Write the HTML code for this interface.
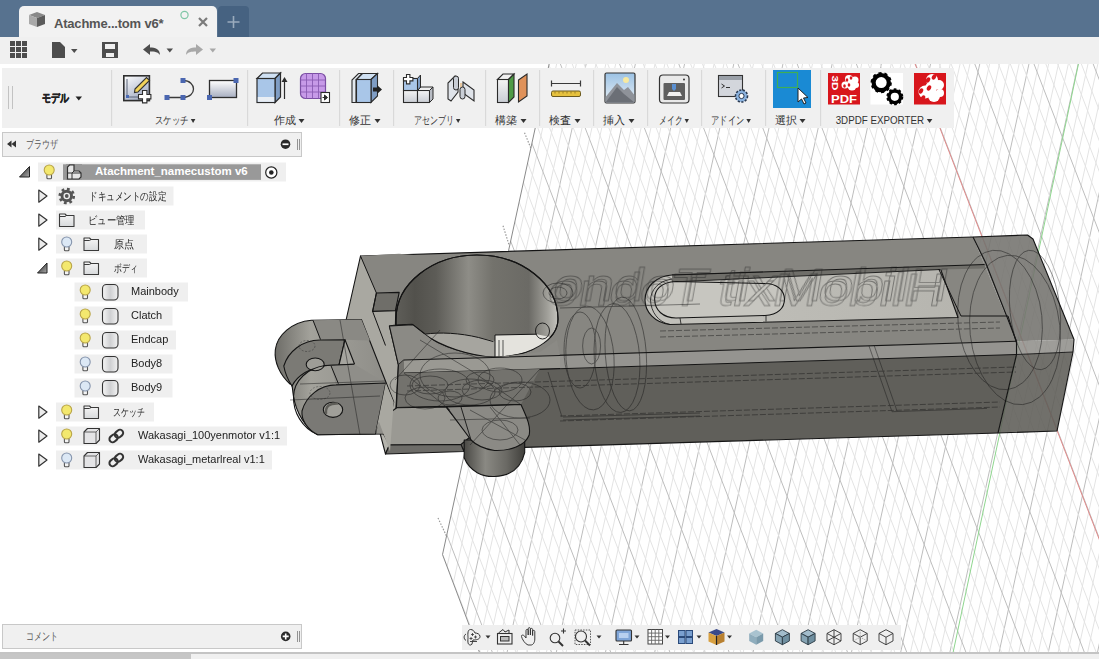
<!DOCTYPE html>
<html><head><meta charset="utf-8">
<style>
*{box-sizing:border-box}
html,body{margin:0;padding:0}
body{width:1099px;height:659px;overflow:hidden;position:relative;background:#fff;font-family:"Liberation Sans",sans-serif;color:#333}
.abs{position:absolute}
#titlebar{left:0;top:0;width:1099px;height:37px;background:#57728f}
#tab{left:19px;top:6px;width:198px;height:31px;background:#f2f2f2;border-radius:5px 5px 0 0}
#plus{left:218px;top:6px;width:31px;height:31px;background:#466281;border-radius:4px 4px 0 0}
#qtb{left:0;top:37px;width:1099px;height:27px;background:#f0f0f0}
#ribbon{left:2px;top:68px;width:952px;height:60px;background:#f0f0f0}
.sep{position:absolute;top:2px;width:1px;height:56px;background:#dcdcdc}
.lbl{position:absolute;top:46px;font-size:10.5px;color:#333;white-space:nowrap;transform:translateX(-50%)}
.tri{display:inline-block;width:0;height:0;border-left:3.5px solid transparent;border-right:3.5px solid transparent;border-top:4px solid #333;vertical-align:1px;margin-left:3px}
#browserhdr{left:2px;top:132px;width:300px;height:25px;background:#f0f0f0;border:1px solid #c8c8c8}
#comment{left:2px;top:624px;width:300px;height:25px;background:#f0f0f0;border:1px solid #c8c8c8}
.row{position:absolute;height:19px;background:#eeeeee}
.rt{position:absolute;font-size:11px;color:#222;white-space:nowrap}
#navbar{left:462px;top:625px;width:439px;height:25px;background:#efefef}
#bottom{left:0;top:652px;width:1099px;height:7px;background:#f0f0f0;border-top:2px solid #c4c4c4}
</style></head><body>

<!-- viewport grid -->
<svg class="abs" style="left:0;top:0" width="1099" height="659" viewBox="0 0 1099 659">
<defs>
<pattern id="pa" patternUnits="userSpaceOnUse" width="49.2" height="100" x="9.2" y="0" patternTransform="skewX(-12.3)"><line x1="0.5" y1="0" x2="0.5" y2="100" stroke="#bdbdbd" stroke-width="1"/><line x1="10.34" y1="0" x2="10.34" y2="100" stroke="#e3e3e3" stroke-width="1"/><line x1="20.18" y1="0" x2="20.18" y2="100" stroke="#e3e3e3" stroke-width="1"/><line x1="30.02" y1="0" x2="30.02" y2="100" stroke="#e3e3e3" stroke-width="1"/><line x1="39.86" y1="0" x2="39.86" y2="100" stroke="#e3e3e3" stroke-width="1"/></pattern>
<pattern id="pb" patternUnits="userSpaceOnUse" width="59.2" height="100" x="2.3" y="0" patternTransform="skewX(21.18)"><line x1="0.5" y1="0" x2="0.5" y2="100" stroke="#bdbdbd" stroke-width="1"/><line x1="12.34" y1="0" x2="12.34" y2="100" stroke="#e3e3e3" stroke-width="1"/><line x1="24.18" y1="0" x2="24.18" y2="100" stroke="#e3e3e3" stroke-width="1"/><line x1="36.02" y1="0" x2="36.02" y2="100" stroke="#e3e3e3" stroke-width="1"/><line x1="47.86" y1="0" x2="47.86" y2="100" stroke="#e3e3e3" stroke-width="1"/></pattern>
<clipPath id="gclip"><polygon points="550,60 442.5,554.6 482,659 1099,659 1099,60"/></clipPath>
</defs>
<g clip-path="url(#gclip)">
<rect x="0" y="60" width="1099" height="600" fill="url(#pa)"/>
<rect x="0" y="60" width="1099" height="600" fill="url(#pb)"/>
<line x1="1092.1" y1="0" x2="951.7" y2="659" stroke="#8fd68f" stroke-width="1"/>
<line x1="890.3" y1="0" x2="1145.6" y2="659" stroke="#e08a8a" stroke-width="1"/>
</g>
<polyline points="550,60 442.5,554.6 482,659" fill="none" stroke="#8a8a8a" stroke-width="1"/>
<g stroke="#999" stroke-width="1.2" stroke-dasharray="1.5 1.5"><path d="M524.5,132.7 L530.8,148 M503,225.7 L509,244.8 M438,518 L446.5,536"/></g>
</svg>

<!-- MODEL -->
<!--MODEL--><svg class="abs" style="left:0;top:0" width="1099" height="659" viewBox="0 0 1099 659">
<defs>
<linearGradient id="ghole" x1="0" y1="0" x2="1" y2="0">
<stop offset="0" stop-color="#5f5e59"/><stop offset="0.12" stop-color="#52514c"/><stop offset="0.25" stop-color="#5d5c57"/><stop offset="0.45" stop-color="#8e8d87"/><stop offset="0.6" stop-color="#73726c"/><stop offset="0.82" stop-color="#6b6a65"/><stop offset="0.93" stop-color="#9e9d97"/><stop offset="1" stop-color="#c4c3bd"/>
</linearGradient>
<linearGradient id="gcyl" x1="0" y1="0" x2="1" y2="0">
<stop offset="0" stop-color="#4a4945"/><stop offset="0.35" stop-color="#8a8983"/><stop offset="0.7" stop-color="#6a6964"/><stop offset="1" stop-color="#403f3b"/>
</linearGradient>
<linearGradient id="glug" x1="0" y1="0" x2="1" y2="0">
<stop offset="0" stop-color="#6e6d68"/><stop offset="0.3" stop-color="#a3a29b"/><stop offset="1" stop-color="#8c8b86"/>
</linearGradient>
<linearGradient id="gfloor" x1="0" y1="0" x2="1" y2="0">
<stop offset="0" stop-color="#c2c1bb"/><stop offset="1" stop-color="#b6b5af"/>
</linearGradient>
<linearGradient id="ghfloor" x1="0" y1="0" x2="1" y2="0">
<stop offset="0" stop-color="#8f8e88"/><stop offset="0.6" stop-color="#a4a39d"/><stop offset="1" stop-color="#b9b8b2"/>
</linearGradient>
</defs>
<g stroke="#141414" stroke-width="1.1" stroke-linejoin="round">
<!-- front face -->
<polygon points="407,360 1016.5,341.3 1016.5,354.5 998,433 390,451.5" fill="#605f5a" stroke="none"/>
<polyline points="998,433 390,451.5" fill="none"/>
<polygon points="407,360 1016.5,341.3 1016.5,354.5 407,374" fill="#959490" stroke="none"/>
<line x1="407" y1="373.5" x2="1016.5" y2="354.5" stroke-width="1"/>
<!-- top face -->
<polygon points="360.5,256 973,237 1016.5,341.3 407,360" fill="#878681" stroke="none"/><polyline points="407,360 360.5,256 973,237" fill="none"/><line x1="407" y1="360" x2="1016.5" y2="341.3"/>
<!-- channel -->
<path d="M672,275 L940,267.5 L958,317.5 L670,324.5 C655,323 645,312 645,300 C645,287 656,276 672,275 Z" fill="url(#gfloor)"/>
<polygon points="672,275 985,264.5 985,268.5 940,269.5 672,282" fill="#6f6e69" stroke="none"/>
<line x1="672" y1="275" x2="985" y2="264.5"/>
<line x1="672" y1="282" x2="940" y2="269.5" stroke-width="0.9"/>
<path d="M676,281.5 C661,282 654,290 654.7,300 C655,310 663,318 676,318 L765,315.5 C778,315 784.5,308 784.5,299 C784,290 777,283.5 765,283.5 Z" fill="#c7c6c0"/>
<path d="M670,324.5 C658,322 651,312 650.5,300 C651,290 658,281 672,279" fill="none" stroke-width="0.8"/>
<line x1="766" y1="315.5" x2="766" y2="321.5" stroke-width="0.8"/>
<line x1="680" y1="318" x2="681" y2="324" stroke-width="0.8"/>
<!-- hole -->
<path d="M396,326 L396,319 C396,283.7 432.3,255 477,255 C521.7,255 558,283.7 558,319 C558,340 530,357 495,357.1 C470,356 440,346 424.6,334.2 L412.3,324.4 L395.4,325 Z" fill="url(#ghole)"/>
<path d="M424.6,334.2 C440,332 460,333 478.6,337.5 L495,341 L495,357.1 C470,356 440,346 424.6,334.2 Z" fill="#a6a59f" stroke="none"/>
<path d="M495,335 L536.8,334.2 L550,337 C545,346 530,354 495,357.1 Z" fill="#e4e3dd" stroke="none"/>
<path d="M396,326 L396,319 C396,283.7 432.3,255 477,255 C521.7,255 558,283.7 558,319 C558,340 530,357 495,357.1 C470,356 440,346 424.6,334.2" fill="none"/>
<path d="M424.6,334.2 C440,332 460,333 478.6,337.5 L493.4,341.6" fill="none" stroke-width="1"/>
<path d="M495,357.1 V335 L536.8,334.2" fill="none" stroke-width="1"/>
<path d="M499,357 V340 M503,357 V340" fill="none" stroke-width="0.7"/>
<ellipse cx="542.5" cy="331" rx="7" ry="8" fill="none" stroke-width="0.9"/>
<!-- left end face -->
<polygon points="360.5,256 396,300 395.4,325 389.4,326 398.4,365 396,407.5 389.4,445 390,451.5 379,421.7 340,347" fill="#a9a8a1"/>
<polygon points="360.5,256 399,253.8 437,257 404,285 399,292.4 376.4,293" fill="#878681" stroke="none"/>
<polygon points="376.4,293 399.2,292.4 395.4,310.6 372.6,311.4" fill="#6f6e69"/>
<polyline points="360.5,256 376.4,293 372.6,311.4 385.5,345.5" fill="none" stroke-width="1"/>
<!-- latch block -->
<polygon points="389.4,326 412.3,324.4 424.6,334.2 440,346 470,356 495,357.1 540,352 557,340 560,356 407,360 398.4,365" fill="#8b8a85" stroke="none"/>
<polyline points="398.4,365 389.4,326 412.8,324.6 424.7,333.7" fill="none"/>

<polygon points="404,360 560,355.5 560,368.5 404,373" fill="#9a9993" stroke="none"/>
<polyline points="398.4,365 404,360 560,355.5" fill="none"/>
<polyline points="404,373 560,368.5" fill="none" stroke-width="1"/>
<polygon points="398.4,365 404,360 404,373 540,368.9 521,404.5 396.4,407.5" fill="#73726d" stroke="none"/><polyline points="398.4,365 396.4,407.5 521,404.5" fill="none"/>
<!-- base plate -->
<polygon points="377,421.7 396.8,407.7 446,407 470,437 461,444.5 389.4,445" fill="#9a9993"/>
<polygon points="377,421.7 389.4,445 385.5,454" fill="#b5b4ad"/>
<polygon points="389.4,445 461,444.5 464,451.5 385.5,454" fill="#6d6c68"/>
<!-- cylinder -->
<path d="M464.2,440 V457.8 C470,472 483,477 494.5,476.5 C510,476 521,468 524.7,452.6 V440 Z" fill="url(#gcyl)"/>
<path d="M446.4,406.9 L521,404.5 C526,416 531,425 529.2,435 C525,446 510,451 494.5,450.5 C484,449 476,445 471,440 Z" fill="#8b8a85"/><path d="M461,407 L471,440" fill="none" stroke-width="0.9"/>
<!-- lugs -->
<path d="M311.4,320.3 L361.4,319.5 L393.7,402 L385.8,434 L317.8,434.7 C305,428 296,412 293.5,396.4 C292,388 293,384 290,384 C280,375 274,362 275.3,350 C277,335 292,322 311.4,320.3 Z" fill="url(#glug)"/>
<polygon points="313,320.3 361.4,319.5 370,340.5 345,339.7 320.5,339.5" fill="#8a8984" stroke="none"/>
<path d="M313,320.3 L320.5,339.5" fill="none" stroke-width="1"/>
<path d="M283.8,366 C288,352 302,340 320,340 L345,339.7 L339,365 L327.4,365.5 C310,367 297,376 292,386 C288,380 285,373 283.8,366 Z" fill="#7b7a75"/>
<polygon points="345,339.7 354.5,364 339,365" fill="#a6a59f"/>
<ellipse cx="307" cy="346" rx="8" ry="5.5" fill="none" stroke="#333" stroke-width="0.7" stroke-dasharray="2 1.5" opacity="0.7"/>
<ellipse cx="315.2" cy="364.4" rx="9" ry="6.4" fill="#9e9d97"/>
<path d="M325,365.5 L354.2,364.2 L385.8,383 L336,384.9 L331.1,366 Z" fill="#8f8e89" stroke="none"/>
<path d="M325,365.5 C308,368 294,380 293.5,396.4 C293,412 302,428 317.8,434.7" fill="none"/>
<path d="M325,365.5 L354.2,364.2" fill="none"/>
<path d="M331.1,366 L338.4,383.7" fill="none" stroke-width="1"/>
<path d="M302,411 C306,396 320,385 336,384.9 L385.8,383 L375.5,434 L317.8,434.7 C308,430 301,420 302,411 Z" fill="#7a7975"/>
<ellipse cx="333" cy="409.8" rx="9.7" ry="7.6" fill="#a09f99"/>
<path d="M326,414 C325,406 330,403 338,403.5" fill="none" stroke="#5e5d58" stroke-width="2.5"/>
<ellipse cx="320" cy="393" rx="10" ry="6.5" fill="none" stroke="#333" stroke-width="0.7" stroke-dasharray="2 1.5" opacity="0.6"/>
<polygon points="385.8,383 393.7,402 390,451.5 379,421.7 375.5,434" fill="#a9a8a1" stroke="none"/>
<!-- endcap translucent -->
<polygon points="973,237 1027.5,235 1033,239 1074,339.5 1016.5,341.3" fill="#73726d" fill-opacity="0.88" stroke="none"/>
<polygon points="1016.5,341.3 1074,339.5 1073,352 1016.5,354.5" fill="#8e8d88" fill-opacity="0.86" stroke="none"/>
<polygon points="1016.5,354.5 1073,352 1057,431 998,433" fill="#5d5c57" fill-opacity="0.88" stroke="none"/>
<polyline points="973,237 1027.5,235 1033,239 1074,339.5 1073,352 1057,431 998,433" fill="none"/>
<polyline points="973,237 985.8,263 1016.5,341.3 1016.5,354.5 998,433" fill="none"/>
<polyline points="1016.5,354.5 1073,352" fill="none" stroke-width="0.9"/>
<polyline points="938.7,269 961,316 1008,316 1016.5,343" fill="none" stroke-width="1"/>
</g>
<!-- hidden wireframe -->
<g fill="none" stroke="#1a1a1a" stroke-width="0.8" opacity="0.6">
<ellipse cx="625.8" cy="354" rx="20.5" ry="57" transform="rotate(-4 625.8 354)"/>
<ellipse cx="617" cy="358" rx="22.7" ry="54.6" transform="rotate(-4 617 358)"/>
<ellipse cx="590" cy="358" rx="24" ry="52" transform="rotate(-4 590 358)"/>
<ellipse cx="591.6" cy="346" rx="9" ry="18"/>
<ellipse cx="580" cy="350" rx="16" ry="38"/>
<path d="M563,417 L700,413 M563,420 L700,416 M560,308 L700,304 M562,417 L548,372"/>
<ellipse cx="558" cy="293" rx="15" ry="10"/>
<ellipse cx="558" cy="293" rx="9" ry="6"/>
<ellipse cx="1015" cy="330" rx="45" ry="75" transform="rotate(-6 1015 330)"/>
<ellipse cx="1000" cy="320" rx="42" ry="70" transform="rotate(-6 1000 320)"/>
<ellipse cx="1035" cy="310" rx="25" ry="60" transform="rotate(-6 1035 310)"/>
<ellipse cx="440" cy="385" rx="30" ry="16"/>
<ellipse cx="470" cy="392" rx="25" ry="13"/>
<ellipse cx="500" cy="380" rx="22" ry="12"/>
<ellipse cx="425" cy="398" rx="20" ry="11"/>
<ellipse cx="455" cy="375" rx="35" ry="22"/>
<ellipse cx="520" cy="400" rx="30" ry="18"/>
<ellipse cx="430" cy="385" rx="18" ry="9"/><ellipse cx="480" cy="380" rx="14" ry="8"/><ellipse cx="482" cy="390" rx="20" ry="10"/><ellipse cx="515" cy="392" rx="16" ry="9"/><ellipse cx="450" cy="398" rx="12" ry="7"/><ellipse cx="405" cy="385" rx="15" ry="10"/><ellipse cx="500" cy="430" rx="18" ry="10"/>
<path d="M404,373 L450,410 M470,370 L520,404 M540,369 L470,445 M420,340 L470,370 M440,330 L395,380"/>
<path d="M407,386 L1016,367 M407,391 L1016,372 M560,416 L1000,402 M560,421 L1000,407" stroke-dasharray="6 2"/>
<path d="M660,331 L1000,322 M660,337 L1000,328" stroke-dasharray="6 2"/>
<path d="M869,346 L892,411.7 L987,408.4 M874,345 L897,411"/>
<path d="M300,384 L385,381 M290,400 L380,396 M340,320 L360,435"/>
<path d="M470,410 L525,440 M490,407 L520,445 M450,420 L530,418"/>
</g>
<!-- text wireframe -->
<g transform="translate(546,306) skewX(-10) scale(1,1.15)" fill="none" stroke="#222" stroke-width="0.7" opacity="0.45" font-family="Liberation Sans" font-size="40">
<text x="0" y="0" textLength="395" lengthAdjust="spacingAndGlyphs">ondoT tixMobilH</text>
<text x="4" y="-5" textLength="395" lengthAdjust="spacingAndGlyphs">ondoT tixMobilH</text>
</g>
</svg>
<!--/MODEL-->

<!-- title bar -->
<div id="titlebar" class="abs"></div>
<div id="tab" class="abs"></div>
<div id="plus" class="abs"></div>
<svg class="abs" style="left:0;top:0" width="260" height="37">
<polygon points="29,15 37,12 45,15 37,18" fill="#888"/>
<polygon points="29,15 37,18 37,27 29,24" fill="#a9a9a9"/>
<polygon points="37,18 45,15 45,24 37,27" fill="#5c5c5c"/>
<circle cx="184.5" cy="15" r="3.6" fill="none" stroke="#7fc6a6" stroke-width="1.2"/>
<path d="M199,18 L207,26 M207,18 L199,26" stroke="#7b7b7b" stroke-width="2.2"/>
<path d="M233.5,16 V28 M227.5,22 H239.5" stroke="#9aabbd" stroke-width="1.6"/>
</svg>
<div class="abs" style="left:54px;top:15.5px;font-size:13px;font-weight:bold;color:#555;letter-spacing:-0.2px">Atachme...tom v6*</div>

<div id="qtb" class="abs"></div>
<svg class="abs" style="left:0;top:37px" width="230" height="27">
<g fill="#4d4d4d">
<rect x="10" y="4" width="5" height="5"/><rect x="16" y="4" width="5" height="5"/><rect x="22" y="4" width="5" height="5"/>
<rect x="10" y="10" width="5" height="5"/><rect x="16" y="10" width="5" height="5"/><rect x="22" y="10" width="5" height="5"/>
<rect x="10" y="16" width="5" height="5"/><rect x="16" y="16" width="5" height="5"/><rect x="22" y="16" width="5" height="5"/>
<path d="M52,5 H60 L65,10 V21 H52 Z"/>
<path d="M71,12 H77.5 L74.25,16 Z"/>
<path d="M102,5 H118 V21 H102 Z M105,7 V12 H115 V7 Z M106,16 V20 H114 V16 Z" fill-rule="evenodd"/>
<path d="M166.5,11.5 H173 L169.75,15.5 Z"/>
<path d="M143,12.5 L150,7 V10.5 C155,10.5 160,12 160,18 C158,15 155,14.5 150,14.5 V18 Z"/>
</g>
<g fill="#a8a8a8">
<path d="M203,12.5 L196,7 V10.5 C191,10.5 186,12 186,18 C188,15 191,14.5 196,14.5 V18 Z"/>
<path d="M209.5,11.5 H216 L212.75,15.5 Z"/>
</g>
</svg>

<div id="ribbon" class="abs"></div>
<svg class="abs" style="left:0;top:0" width="960" height="132" viewBox="0 0 960 132">
<defs>
<linearGradient id="gsk" x1="0" y1="0" x2="0.6" y2="1"><stop offset="0" stop-color="#ffffff"/><stop offset="1" stop-color="#a3adc4"/></linearGradient>
<linearGradient id="grc" x1="0" y1="0" x2="0" y2="1"><stop offset="0" stop-color="#ffffff"/><stop offset="1" stop-color="#a7aec0"/></linearGradient>
<linearGradient id="gsky" x1="0" y1="0" x2="0" y2="1"><stop offset="0" stop-color="#9cc2e4"/><stop offset="1" stop-color="#e8f0f6"/></linearGradient>
<linearGradient id="gbox" x1="0" y1="0" x2="0" y2="1"><stop offset="0" stop-color="#f4f4f4"/><stop offset="1" stop-color="#c9cdd4"/></linearGradient>
</defs>
<g stroke="#c2c2c2" stroke-width="1"><line x1="8.5" y1="86" x2="8.5" y2="109"/><line x1="12.5" y1="86" x2="12.5" y2="109"/></g>
<g fill="#d9d9d9">
<rect x="111" y="70" width="1.2" height="56"/><rect x="247" y="70" width="1.2" height="56"/><rect x="339" y="70" width="1.2" height="56"/>
<rect x="393" y="70" width="1.2" height="56"/><rect x="485" y="70" width="1.2" height="56"/><rect x="539" y="70" width="1.2" height="56"/>
<rect x="593" y="70" width="1.2" height="56"/><rect x="647" y="70" width="1.2" height="56"/><rect x="701" y="70" width="1.2" height="56"/>
<rect x="765" y="70" width="1.2" height="56"/><rect x="820" y="70" width="1.2" height="56"/>
</g>
<!-- sketch -->
<rect x="123.8" y="75.8" width="25.6" height="24.8" fill="url(#gsk)" stroke="#2e2e2e" stroke-width="1.6"/>
<path d="M127,79 V97 H145" fill="none" stroke="#5a6478" stroke-width="1"/>
<rect x="126" y="95" width="3" height="3" fill="#4a6ab5"/>
<path d="M135,89 L146.5,77.5 L149.5,80.5 L138,92 L134.5,92.5 Z" fill="#f2d35a" stroke="#333" stroke-width="1.1"/>
<path d="M142.5,90.5 h4.4 v4 h4 v4.4 h-4 v4 h-4.4 v-4 h-4 v-4.4 h4 Z" fill="#fff" stroke="#2e2e2e" stroke-width="1.1"/>
<!-- line -->
<path d="M167,97.5 H183 M183,80.5 C197,80.5 197,97.5 183,97.5" fill="none" stroke="#3a3a3a" stroke-width="1.3"/>
<g fill="#4a66b0"><rect x="164.5" y="95" width="5" height="5"/><rect x="180.5" y="95" width="5" height="5"/><rect x="180.5" y="78" width="5" height="5"/></g>
<!-- rect -->
<rect x="209.5" y="80.5" width="27" height="17" fill="url(#grc)" stroke="#2e2e2e" stroke-width="1.3"/>
<g fill="#4a66b0"><rect x="233.5" y="78" width="5" height="5"/><rect x="207" y="95" width="5" height="5"/></g>
<!-- extrude -->
<path d="M257,78.5 L262.5,73 H280.5 L275,78.5 Z" fill="#cfe0f2" stroke="#2b2b2b" stroke-width="1.2"/>
<path d="M275,78.5 L280.5,73 V97 L275,102.5 Z" fill="#7f9dc4" stroke="#2b2b2b" stroke-width="1.2"/>
<rect x="257" y="78.5" width="18" height="24" fill="#a9c6e8" stroke="#2b2b2b" stroke-width="1.2"/>
<rect x="257.8" y="97" width="16.4" height="4.8" fill="#e9eef4"/>
<path d="M284.5,99 V79" stroke="#2b2b2b" stroke-width="1.2"/><path d="M281.5,82 L284.5,77 L287.5,82 Z" fill="#2b2b2b"/>
<!-- purple mesh -->
<rect x="300.5" y="73.5" width="25" height="25" rx="5" fill="#c79ae8" stroke="#7b4fa3" stroke-width="1.2"/>
<g stroke="#8a5bb3" stroke-width="0.9" fill="none"><path d="M300.5,80 H325 M300.5,86 H325 M300.5,92 H325 M306.5,73.5 V98.5 M312.5,73.5 V98.5 M318.5,73.5 V98.5"/></g>
<rect x="321" y="92.5" width="8.5" height="10" fill="#fff" stroke="#2b2b2b" stroke-width="1.1"/>
<path d="M322.5,97.5 H326 M324.5,95 L327.5,97.5 L324.5,100 Z" fill="#2b2b2b" stroke="#2b2b2b" stroke-width="1"/>
<!-- modify -->
<path d="M352,102.5 V80 L358.5,73.5 H362 L356,80 V102.5 Z" fill="#e3e8ee" stroke="#2b2b2b" stroke-width="1.1"/>
<path d="M356.5,79.5 L362.5,73.5 H377.5 L371,79.5 Z" fill="#cfe0f2" stroke="#2b2b2b" stroke-width="1.1"/>
<path d="M371,79.5 L377.5,73.5 V96 L371,102.5 Z" fill="#7f9dc4" stroke="#2b2b2b" stroke-width="1.1"/>
<rect x="356.5" y="79.5" width="14.5" height="23" fill="#a9c6e8" stroke="#2b2b2b" stroke-width="1.1"/>
<path d="M373,87.5 H377 V85 L382,89.5 L377,94 V91.5 H373 Z" fill="#222"/>
<!-- assembly 1 -->
<rect x="403.5" y="90.5" width="14" height="12" fill="url(#gbox)" stroke="#2b2b2b" stroke-width="1.1"/>
<rect x="417.5" y="90.5" width="12" height="12" fill="url(#gbox)" stroke="#2b2b2b" stroke-width="1.1"/>
<path d="M417.5,90.5 L421,87 H433 L429.5,90.5 Z" fill="#eee" stroke="#2b2b2b" stroke-width="1"/>
<path d="M429.5,90.5 L433,87 V99 L429.5,102.5 Z" fill="#b8bcc4" stroke="#2b2b2b" stroke-width="1"/>
<rect x="403.5" y="78.5" width="14" height="12" fill="#a9c6e8" stroke="#2b2b2b" stroke-width="1.1"/>
<path d="M417.5,78.5 L420.5,75 V87 L417.5,90.5 Z" fill="#7f9dc4" stroke="#2b2b2b" stroke-width="1"/>
<path d="M406.5,74.5 h3.4 v3 h3 v3.4 h-3 v3 h-3.4 v-3 h-3 v-3.4 h3 Z" fill="#fff" stroke="#2b2b2b" stroke-width="1.1"/>
<!-- assembly 2 -->
<path d="M448,99 L448,83 L455,76 L458,78 L458,92 L451,101 Z" fill="#dfe3e9" stroke="#2b2b2b" stroke-width="1.1"/>
<path d="M463,82 L474,90 V101 L463,93 Z" fill="#dfe3e9" stroke="#2b2b2b" stroke-width="1.1"/>
<rect x="453.5" y="76" width="5" height="14" rx="2.5" fill="#c9ced6" stroke="#2b2b2b" stroke-width="1"/>
<rect x="460" y="87" width="5" height="12" rx="2.5" fill="#c9ced6" stroke="#2b2b2b" stroke-width="1"/>
<path d="M461,83 V87" stroke="#e0a050" stroke-width="1"/>
<!-- construct -->
<path d="M497.5,79.5 L503,74 H514 L508.5,79.5 Z" fill="#f0f0f0" stroke="#2b2b2b" stroke-width="1.1"/>
<rect x="497.5" y="79.5" width="11" height="23" fill="url(#gbox)" stroke="#2b2b2b" stroke-width="1.1"/>
<path d="M508.5,79.5 L514,74 V97 L508.5,102.5 Z" fill="#4e9a45" stroke="#2b2b2b" stroke-width="1.1"/>
<path d="M518.5,80 L527,74 V96 L518.5,102 Z" fill="#e0925a" stroke="#2b2b2b" stroke-width="1.1"/>
<!-- inspect -->
<path d="M551.5,83.5 H580.5 M551.5,80.5 V86.5 M580.5,80.5 V86.5" stroke="#3a3a3a" stroke-width="1.2"/>
<rect x="551.5" y="91" width="29" height="5.5" rx="1.5" fill="#e6c13e" stroke="#6b5a20" stroke-width="1"/>
<path d="M555,91.5 v2 M559,91.5 v2 M563,91.5 v2 M567,91.5 v2 M571,91.5 v2 M575,91.5 v2" stroke="#8a7020" stroke-width="0.8"/>
<!-- insert -->
<rect x="605" y="73" width="30" height="30" rx="1.5" fill="url(#gsky)" stroke="#333" stroke-width="1.2"/>
<circle cx="626" cy="80" r="3" fill="#f7e9a0"/>
<path d="M605.6,97 L617,83 L624,90 L628,87 L634.4,95 V102.4 H605.6 Z" fill="#8e9299"/>
<path d="M605.6,102.4 L617,87 L624,94 L634.4,102.4 Z" fill="#6b6f76"/>
<!-- make -->
<rect x="659.5" y="75" width="29.5" height="28" rx="3.5" fill="#e9e9e9" stroke="#333" stroke-width="1.2"/>
<rect x="663.5" y="83" width="21.5" height="17" rx="1" fill="#5e5e5e"/>
<path d="M667,96 H682 L680,92 H669 Z" fill="#f0f0f0"/>
<path d="M672,84 h4 v5 l-2,2 l-2,-2 Z" fill="#5a8fd0"/>
<circle cx="684" cy="79.5" r="1" fill="#333"/>
<!-- addin -->
<rect x="718.5" y="75.5" width="24" height="21" fill="#d3d6dc" stroke="#333" stroke-width="1.1"/>
<rect x="719" y="76" width="23" height="4" fill="#9aa0a8"/>
<path d="M721.5,84 L724.5,86 L721.5,88 M726,87.5 H730" fill="none" stroke="#333" stroke-width="1"/>
<circle cx="741.5" cy="96" r="6" fill="#8bb3e0" stroke="#2b3a50" stroke-width="1.6" stroke-dasharray="2.2 1.4"/>
<circle cx="741.5" cy="96" r="2.6" fill="#fff" stroke="#2b3a50" stroke-width="1"/>
<!-- select -->
<rect x="773" y="70" width="38" height="38" fill="#1a8ad4"/>
<rect x="777.5" y="72.5" width="20" height="15" fill="none" stroke="#3fae55" stroke-width="1.2"/>
<path d="M798,88 V102 L801.5,99 L804,104 L806,103 L803.5,98 L808,97.5 Z" fill="#fff" stroke="#222" stroke-width="1"/>
<!-- 3dpdf -->
<rect x="828" y="73" width="32" height="31.5" fill="#d8161c"/>
<text x="844" y="102.5" font-family="Liberation Sans" font-weight="bold" font-size="11" fill="#fff" text-anchor="middle" textLength="26" lengthAdjust="spacingAndGlyphs">PDF</text>
<text transform="translate(831.5,75.5) rotate(90)" font-family="Liberation Sans" font-weight="bold" font-size="9.5" fill="#fff" textLength="15" lengthAdjust="spacingAndGlyphs">3D</text>
<g fill="#fff"><circle cx="849" cy="79" r="4"/><circle cx="855" cy="80" r="3.5"/><circle cx="845" cy="85" r="3.5"/><circle cx="852" cy="86" r="4.5"/><circle cx="856" cy="85" r="3"/></g>
<g fill="#d8161c"><ellipse cx="847" cy="80" rx="1.3" ry="1.8"/><ellipse cx="851" cy="78" rx="1.3" ry="1.8"/><ellipse cx="844.5" cy="86" rx="1.3" ry="1.8"/><ellipse cx="849" cy="85" rx="1.3" ry="1.8"/></g>
<!-- gears -->
<rect x="870.5" y="73" width="32.5" height="31.5" fill="#fff"/>
<circle cx="881.2" cy="82.6" r="7.6" fill="none" stroke="#000" stroke-width="4.2"/>
<circle cx="881.2" cy="82.6" r="9.4" fill="none" stroke="#000" stroke-width="2.5" stroke-dasharray="3 2.9"/>
<circle cx="894.8" cy="96.8" r="5.8" fill="none" stroke="#000" stroke-width="3.4"/>
<circle cx="894.8" cy="96.8" r="7.4" fill="none" stroke="#000" stroke-width="2.2" stroke-dasharray="2.6 2.2"/>
<!-- red flower -->
<rect x="914" y="73" width="32" height="31.5" fill="#d8161c"/>
<g fill="#fff"><circle cx="932" cy="80" r="6"/><circle cx="939" cy="85" r="5"/><circle cx="925" cy="92" r="6.5"/><circle cx="934" cy="96" r="6"/><circle cx="931" cy="88" r="6"/><circle cx="940" cy="93" r="4"/></g>
<g fill="#d8161c"><ellipse cx="928" cy="80" rx="2" ry="2.8" transform="rotate(30 928 80)"/><ellipse cx="934" cy="77" rx="2" ry="2.8" transform="rotate(30 934 77)"/><ellipse cx="921" cy="91" rx="2" ry="2.8" transform="rotate(30 921 91)"/><ellipse cx="929" cy="88" rx="2" ry="2.8" transform="rotate(30 929 88)"/><ellipse cx="923" cy="98" rx="2" ry="2.8" transform="rotate(30 923 98)"/></g>
</svg>
<div class="abs lbl" style="left:175.4px;top:114px;transform:translateX(-50%) scaleX(0.77)">スケッチ<span class="tri"></span></div>
<div class="abs lbl" style="left:289.4px;top:114px;transform:translateX(-50%) scaleX(1)">作成<span class="tri"></span></div>
<div class="abs lbl" style="left:364.5px;top:114px;transform:translateX(-50%) scaleX(1)">修正<span class="tri"></span></div>
<div class="abs lbl" style="left:436.9px;top:114px;transform:translateX(-50%) scaleX(0.73)">アセンブリ<span class="tri"></span></div>
<div class="abs lbl" style="left:510.5px;top:114px;transform:translateX(-50%) scaleX(1)">構築<span class="tri"></span></div>
<div class="abs lbl" style="left:564.7px;top:114px;transform:translateX(-50%) scaleX(1)">検査<span class="tri"></span></div>
<div class="abs lbl" style="left:618.7px;top:114px;transform:translateX(-50%) scaleX(1)">挿入<span class="tri"></span></div>
<div class="abs lbl" style="left:674.2px;top:114px;transform:translateX(-50%) scaleX(0.71)">メイク<span class="tri"></span></div>
<div class="abs lbl" style="left:731.4px;top:114px;transform:translateX(-50%) scaleX(0.75)">アドイン<span class="tri"></span></div>
<div class="abs lbl" style="left:790.4px;top:114px;transform:translateX(-50%) scaleX(1)">選択<span class="tri"></span></div>
<div class="abs lbl" style="left:884.3px;top:114px;transform:translateX(-50%) scaleX(0.93)">3DPDF EXPORTER<span class="tri"></span></div>
<div class="abs" style="left:41.5px;top:91px;font-size:11.5px;font-weight:bold;color:#222;-webkit-text-stroke:0.45px #222;transform:scaleX(0.74);transform-origin:left">モデル</div><svg class="abs" style="left:75px;top:96px" width="8" height="5"><path d="M0.5,0.5 H7 L3.75,4.5 Z" fill="#222"/></svg>

<div id="browserhdr" class="abs"></div>
<svg class="abs" style="left:0;top:130px" width="305" height="30" viewBox="0 130 305 30">
<path d="M7,144 L11.5,140.5 V147.5 Z M11.5,144 L16,140.5 V147.5 Z" fill="#333"/>
<circle cx="285.5" cy="144.2" r="4.8" fill="#2a2a2a"/><rect x="282.5" y="143.4" width="6" height="1.7" fill="#fff"/>
<path d="M297.5,139 V150 M299.5,139 V150" stroke="#888" stroke-width="0.9"/>
</svg>
<div class="abs" style="left:26px;top:137px;font-size:11px;color:#555;transform:scaleX(0.73);transform-origin:left">ブラウザ</div>
<!--TREE--><svg class="abs" style="left:0;top:0" width="300" height="480" viewBox="0 0 300 480"><defs>
<linearGradient id="gtri" x1="0" y1="0" x2="1" y2="1"><stop offset="0" stop-color="#222"/><stop offset="1" stop-color="#aaa"/></linearGradient>
<linearGradient id="gfold" x1="0" y1="0" x2="0" y2="1"><stop offset="0" stop-color="#f6f6f6"/><stop offset="1" stop-color="#d8dadc"/></linearGradient>
<linearGradient id="gbody" x1="0" y1="0" x2="1" y2="0"><stop offset="0" stop-color="#f6f6f6"/><stop offset="0.5" stop-color="#cfd0d2"/><stop offset="1" stop-color="#f2f2f2"/></linearGradient>
</defs><rect x="38" y="162.5" width="248" height="19" fill="#efefef"/><path d="M19.5,177 L29.5,166.5 V177 Z" fill="url(#gtri)" stroke="#222" stroke-width="1"/><rect x="46.9" y="174" width="4.6" height="4.8" rx="1" fill="#f4f4f4" stroke="#555" stroke-width="1.1"/><circle cx="49.2" cy="170" r="5" fill="#f3e86e" stroke="#b9a548" stroke-width="1.1"/><rect x="66" y="164" width="16" height="16" fill="#999"/><path d="M67.5,179 V167 L69.5,165 H74 V171 H79 L81,173 V177 L79,179 Z" fill="#e6e6e6" stroke="#333" stroke-width="1.2"/><path d="M74,171 L72,173 V179 M72,173 H81" fill="none" stroke="#333" stroke-width="1"/><rect x="63" y="164.3" width="198" height="15.6" fill="#999"/><circle cx="271.3" cy="172.5" r="5.6" fill="#fff" stroke="#222" stroke-width="1.2"/><circle cx="271.3" cy="172.5" r="2.3" fill="#222"/><path d="M67.5,179 V167 L69.5,165 H74 V171 H79 L81,173 V177 L79,179 Z" fill="#e6e6e6" stroke="#333" stroke-width="1.2"/><path d="M74,171 L72,173 V179 M72,173 H81 M67.5,173 H72" fill="none" stroke="#333" stroke-width="1"/><rect x="56" y="186.5" width="117.5" height="19" fill="#efefef"/><path d="M38.8,190 L47,196 L38.8,202.2 Z" fill="#ececec" stroke="#333" stroke-width="1.2" stroke-linejoin="round"/><circle cx="66.75" cy="196" r="6.2" fill="#555"/><circle cx="66.75" cy="196" r="7" fill="none" stroke="#555" stroke-width="2.6" stroke-dasharray="2.75 2.75"/><circle cx="66.75" cy="196" r="3.3" fill="#f0f0f0"/><circle cx="66.75" cy="196" r="1.9" fill="#555"/><rect x="56" y="210.5" width="89" height="19" fill="#efefef"/><path d="M38.8,214 L47,220 L38.8,226.2 Z" fill="#ececec" stroke="#333" stroke-width="1.2" stroke-linejoin="round"/><path d="M59.5,226.5 V214 H65 L66.5,215.5 H74 V226.5 Z" fill="url(#gfold)" stroke="#3a3a3a" stroke-width="1.1" stroke-linejoin="round"/><path d="M59.5,216.5 H65 L66.5,215.5" fill="none" stroke="#3a3a3a" stroke-width="1"/><rect x="56" y="234.5" width="91" height="19" fill="#efefef"/><path d="M38.8,238 L47,244 L38.8,250.2 Z" fill="#ececec" stroke="#333" stroke-width="1.2" stroke-linejoin="round"/><rect x="64.4" y="246" width="4.6" height="4.8" rx="1" fill="#f4f4f4" stroke="#555" stroke-width="1.1"/><circle cx="66.7" cy="242" r="5" fill="#dce8f5" stroke="#8695ad" stroke-width="1.1"/><path d="M84.0,250.5 V238 H89.5 L91.0,239.5 H98.5 V250.5 Z" fill="url(#gfold)" stroke="#3a3a3a" stroke-width="1.1" stroke-linejoin="round"/><path d="M84.0,240.5 H89.5 L91.0,239.5" fill="none" stroke="#3a3a3a" stroke-width="1"/><rect x="56" y="258.5" width="91" height="19" fill="#efefef"/><path d="M37.5,273 L47,263 V273 Z" fill="url(#gtri)" stroke="#222" stroke-width="1"/><rect x="64.4" y="270" width="4.6" height="4.8" rx="1" fill="#f4f4f4" stroke="#555" stroke-width="1.1"/><circle cx="66.7" cy="266" r="5" fill="#f3e86e" stroke="#b9a548" stroke-width="1.1"/><path d="M84.0,274.5 V262 H89.5 L91.0,263.5 H98.5 V274.5 Z" fill="url(#gfold)" stroke="#3a3a3a" stroke-width="1.1" stroke-linejoin="round"/><path d="M84.0,264.5 H89.5 L91.0,263.5" fill="none" stroke="#3a3a3a" stroke-width="1"/><rect x="74.5" y="282.5" width="113.5" height="19" fill="#efefef"/><rect x="82.9" y="294" width="4.6" height="4.8" rx="1" fill="#f4f4f4" stroke="#555" stroke-width="1.1"/><circle cx="85.2" cy="290" r="5" fill="#f3e86e" stroke="#b9a548" stroke-width="1.1"/><rect x="102.5" y="284.5" width="15.5" height="15.5" rx="4" fill="url(#gbody)" stroke="#333" stroke-width="1.1"/><rect x="74.5" y="306.5" width="98.0" height="19" fill="#efefef"/><rect x="82.9" y="318" width="4.6" height="4.8" rx="1" fill="#f4f4f4" stroke="#555" stroke-width="1.1"/><circle cx="85.2" cy="314" r="5" fill="#f3e86e" stroke="#b9a548" stroke-width="1.1"/><rect x="102.5" y="308.5" width="15.5" height="15.5" rx="4" fill="url(#gbody)" stroke="#333" stroke-width="1.1"/><rect x="74.5" y="330.5" width="101.5" height="19" fill="#efefef"/><rect x="82.9" y="342" width="4.6" height="4.8" rx="1" fill="#f4f4f4" stroke="#555" stroke-width="1.1"/><circle cx="85.2" cy="338" r="5" fill="#f3e86e" stroke="#b9a548" stroke-width="1.1"/><rect x="102.5" y="332.5" width="15.5" height="15.5" rx="4" fill="url(#gbody)" stroke="#333" stroke-width="1.1"/><rect x="74.5" y="354.5" width="98.0" height="19" fill="#efefef"/><rect x="82.9" y="366" width="4.6" height="4.8" rx="1" fill="#f4f4f4" stroke="#555" stroke-width="1.1"/><circle cx="85.2" cy="362" r="5" fill="#dce8f5" stroke="#8695ad" stroke-width="1.1"/><rect x="102.5" y="356.5" width="15.5" height="15.5" rx="4" fill="url(#gbody)" stroke="#333" stroke-width="1.1"/><rect x="74.5" y="378.5" width="98.0" height="19" fill="#efefef"/><rect x="82.9" y="390" width="4.6" height="4.8" rx="1" fill="#f4f4f4" stroke="#555" stroke-width="1.1"/><circle cx="85.2" cy="386" r="5" fill="#dce8f5" stroke="#8695ad" stroke-width="1.1"/><rect x="102.5" y="380.5" width="15.5" height="15.5" rx="4" fill="url(#gbody)" stroke="#333" stroke-width="1.1"/><rect x="56" y="402.5" width="98" height="19" fill="#efefef"/><path d="M38.8,406 L47,412 L38.8,418.2 Z" fill="#ececec" stroke="#333" stroke-width="1.2" stroke-linejoin="round"/><rect x="64.4" y="414" width="4.6" height="4.8" rx="1" fill="#f4f4f4" stroke="#555" stroke-width="1.1"/><circle cx="66.7" cy="410" r="5" fill="#f3e86e" stroke="#b9a548" stroke-width="1.1"/><path d="M84.0,418.5 V406 H89.5 L91.0,407.5 H98.5 V418.5 Z" fill="url(#gfold)" stroke="#3a3a3a" stroke-width="1.1" stroke-linejoin="round"/><path d="M84.0,408.5 H89.5 L91.0,407.5" fill="none" stroke="#3a3a3a" stroke-width="1"/><rect x="56" y="426.5" width="231" height="19" fill="#efefef"/><path d="M38.8,430 L47,436 L38.8,442.2 Z" fill="#ececec" stroke="#333" stroke-width="1.2" stroke-linejoin="round"/><rect x="64.4" y="438" width="4.6" height="4.8" rx="1" fill="#f4f4f4" stroke="#555" stroke-width="1.1"/><circle cx="66.7" cy="434" r="5" fill="#f3e86e" stroke="#b9a548" stroke-width="1.1"/><path d="M84.0,443.5 V432 L87.5,428.5 H99.5 V440 L96.0,443.5 Z" fill="#e4e4e6" stroke="#333" stroke-width="1.1" stroke-linejoin="round"/><path d="M96.0,443.5 V432 L99.5,428.5 M96.0,432 H84.0" fill="none" stroke="#444" stroke-width="0.8"/><g transform="translate(116.3,436) rotate(-40)"><rect x="-8" y="-3.2" width="9" height="6.4" rx="3.2" fill="none" stroke="#333" stroke-width="2"/><rect x="-1" y="-3.2" width="9" height="6.4" rx="3.2" fill="none" stroke="#333" stroke-width="2"/></g><rect x="56" y="450.5" width="216" height="19" fill="#efefef"/><path d="M38.8,454 L47,460 L38.8,466.2 Z" fill="#ececec" stroke="#333" stroke-width="1.2" stroke-linejoin="round"/><rect x="64.4" y="462" width="4.6" height="4.8" rx="1" fill="#f4f4f4" stroke="#555" stroke-width="1.1"/><circle cx="66.7" cy="458" r="5" fill="#dce8f5" stroke="#8695ad" stroke-width="1.1"/><path d="M84.0,467.5 V456 L87.5,452.5 H99.5 V464 L96.0,467.5 Z" fill="#e4e4e6" stroke="#333" stroke-width="1.1" stroke-linejoin="round"/><path d="M96.0,467.5 V456 L99.5,452.5 M96.0,456 H84.0" fill="none" stroke="#444" stroke-width="0.8"/><g transform="translate(116.3,460) rotate(-40)"><rect x="-8" y="-3.2" width="9" height="6.4" rx="3.2" fill="none" stroke="#333" stroke-width="2"/><rect x="-1" y="-3.2" width="9" height="6.4" rx="3.2" fill="none" stroke="#333" stroke-width="2"/></g></svg>
<div class="rt" style="left:95px;top:165px;font-weight:bold;color:#fff;font-size:11.5px">Atachment_namecustom v6</div>
<div class="rt" style="left:89px;top:189px;transform:scaleX(0.78);transform-origin:left">ドキュメントの設定</div>
<div class="rt" style="left:88px;top:213px;transform:scaleX(0.85);transform-origin:left">ビュー管理</div>
<div class="rt" style="left:114px;top:237px;transform:scaleX(0.92);transform-origin:left">原点</div>
<div class="rt" style="left:114px;top:261px;transform:scaleX(0.72);transform-origin:left">ボディ</div>
<div class="rt" style="left:131px;top:285px">Mainbody</div>
<div class="rt" style="left:131px;top:309px">Clatch</div>
<div class="rt" style="left:131px;top:333px">Endcap</div>
<div class="rt" style="left:131px;top:357px">Body8</div>
<div class="rt" style="left:131px;top:381px">Body9</div>
<div class="rt" style="left:113px;top:405px;transform:scaleX(0.72);transform-origin:left">スケッチ</div>
<div class="rt" style="left:138px;top:429px">Wakasagi_100yenmotor v1:1</div>
<div class="rt" style="left:138px;top:453px">Wakasagi_metarlreal v1:1</div><!--/TREE-->

<div id="comment" class="abs"></div>
<div class="abs" style="left:25.5px;top:629px;font-size:11px;color:#555;transform:scaleX(0.73);transform-origin:left">コメント</div>
<svg class="abs" style="left:270px;top:626px" width="35" height="22" viewBox="270 626 35 22">
<circle cx="285.7" cy="636.4" r="4.8" fill="#2a2a2a"/><path d="M282.7,636.4 H288.7 M285.7,633.4 V639.4" stroke="#fff" stroke-width="1.6"/>
<path d="M297.5,631 V642 M299.5,631 V642" stroke="#888" stroke-width="0.9"/>
</svg>
<div id="navbar" class="abs"></div>
<svg class="abs" style="left:455px;top:622px" width="450" height="30" viewBox="455 622 450 30">
<g fill="none" stroke="#333" stroke-width="1.1">
<path d="M470.5,629.5 C467,629.5 468,636 468,637.5 C468,640 467,645 470.5,645 C473,645 472,641 473,640 C476,640 480,639.5 480,636.5 C480,634 477,633 475,633 C474,631 473,629.5 470.5,629.5 Z" stroke-width="1"/>
<path d="M466,634 C463.5,635.5 463.5,639 466,640.5" stroke-width="1"/>
<path d="M471,634.5 h3 M472.5,633 v3 M474,637 h3 M475.5,635.5 v3 M469.5,638.5 h3 M471,637 v3" stroke-width="0.8"/>
<path d="M470,641.5 H477" stroke-width="0.9"/>
<rect x="497.5" y="633.5" width="14.5" height="10.5" stroke-width="1.1"/><rect x="500.5" y="636.5" width="8.5" height="4.5" fill="#bbb" stroke-width="1"/><path d="M498.5,633 L503,629.5 L505,632 L509,630 V633" stroke-width="1"/>
<path d="M528,645 C525,644 522,639 521.5,636.5 C521,635 523,634.5 524.5,636 L526,638 V630.5 C526,629 528.2,629 528.2,630.5 V635 V628.8 C528.2,627.2 530.4,627.2 530.4,628.8 V635 V629.5 C530.4,628 532.6,628 532.6,629.5 V635.5 V631.5 C532.6,630 534.8,630 534.8,631.5 V639 C534.8,642.5 533,645 531,645 Z" stroke-width="0.95"/>
<circle cx="555" cy="638" r="4.8"/><path d="M558.5,641.5 L563,646" stroke-width="2"/><path d="M561,631 h5 M563.5,628.5 v5"/>
<circle cx="581" cy="636.5" r="5.5"/><path d="M585,640.5 L590,645.5" stroke-width="2"/><rect x="575" y="630" width="15.5" height="14.5" stroke-dasharray="1.5 1.2" stroke-width="0.8"/>
</g>
<g fill="#333">
<path d="M485.5,635.5 h5 l-2.5,3 z"/><path d="M596.5,635.5 h5 l-2.5,3 z"/><path d="M634.5,635.5 h5 l-2.5,3 z"/><path d="M665,635.5 h5 l-2.5,3 z"/><path d="M696.5,635.5 h5 l-2.5,3 z"/><path d="M727,635.5 h5 l-2.5,3 z"/>
</g>
<rect x="616" y="630" width="15.5" height="11" rx="1" fill="#7fa5d8" stroke="#333" stroke-width="1.1"/><rect x="619" y="633" width="9.5" height="5" fill="#b8d0f0"/><path d="M623.7,641 v3 M619,644.5 h9.5" stroke="#333" stroke-width="1.1"/>
<rect x="648" y="629.5" width="14.5" height="14.5" fill="#fff" stroke="#444" stroke-width="1"/>
<path d="M651.6,629.5 v14.5 M655.2,629.5 v14.5 M658.8,629.5 v14.5 M648,633.1 h14.5 M648,636.7 h14.5 M648,640.3 h14.5" stroke="#666" stroke-width="0.9"/>
<rect x="678.5" y="630.5" width="6.5" height="6" fill="#7aa0d0" stroke="#2a4a7a" stroke-width="1"/><rect x="686" y="630.5" width="6.5" height="6" fill="#7aa0d0" stroke="#2a4a7a" stroke-width="1"/>
<rect x="678.5" y="637.5" width="6.5" height="6" fill="#7aa0d0" stroke="#2a4a7a" stroke-width="1"/><rect x="686" y="637.5" width="6.5" height="6" fill="#7aa0d0" stroke="#2a4a7a" stroke-width="1"/>
<polygon points="716.5,629 724.5,632.5 716.5,636 708.5,632.5" fill="#3a4a8a"/>
<polygon points="708.5,632.5 716.5,636 716.5,645 708.5,641.5" fill="#d8a040"/>
<polygon points="724.5,632.5 716.5,636 716.5,645 724.5,641.5" fill="#b88030"/>
<path d="M716.5,636 V645" stroke="#222" stroke-width="1.2"/>
<polygon points="756.2,629.7 763.2,633.45 756.2,637.2 749.2,633.45" fill="#a9c3d0"/><polygon points="749.2,633.45 756.2,637.2 756.2,644.7 749.2,640.95" fill="#8fadbd"/><polygon points="763.2,633.45 756.2,637.2 756.2,644.7 763.2,640.95" fill="#7a9aab"/><polygon points="782.4,629.7 789.4,633.45 782.4,637.2 775.4,633.45" fill="#a2bccb" stroke="#2b3a44" stroke-width="0.9"/><polygon points="775.4,633.45 782.4,637.2 782.4,644.7 775.4,640.95" fill="#86a4b4" stroke="#2b3a44" stroke-width="0.9"/><polygon points="789.4,633.45 782.4,637.2 782.4,644.7 789.4,640.95" fill="#6f8fa0" stroke="#2b3a44" stroke-width="0.9"/><polygon points="808.1,629.7 815.1,633.45 808.1,637.2 801.1,633.45" fill="#a2bccb" stroke="#2b3a44" stroke-width="0.9"/><polygon points="801.1,633.45 808.1,637.2 808.1,644.7 801.1,640.95" fill="#86a4b4" stroke="#2b3a44" stroke-width="0.9"/><polygon points="815.1,633.45 808.1,637.2 808.1,644.7 815.1,640.95" fill="#6f8fa0" stroke="#2b3a44" stroke-width="0.9"/><polygon points="834,629.7 841,633.45 841,640.95 834,644.7 827,640.95 827,633.45" fill="none" stroke="#333" stroke-width="0.9"/><path d="M827,633.45 L834,637.2 L841,633.45 M834,637.2 V644.7" fill="none" stroke="#333" stroke-width="0.9"/><path d="M834,629.7 V637.2 M827,640.95 L834,637.2 L841,640.95" fill="none" stroke="#333" stroke-width="0.9"/><polygon points="860.2,629.7 867.2,633.45 867.2,640.95 860.2,644.7 853.2,640.95 853.2,633.45" fill="none" stroke="#333" stroke-width="0.9"/><path d="M853.2,633.45 L860.2,637.2 L867.2,633.45 M860.2,637.2 V644.7" fill="none" stroke="#333" stroke-width="0.9"/><path d="M860.2,629.7 V637.2 M853.2,640.95 L860.2,637.2 L867.2,640.95" fill="none" stroke="#999" stroke-width="0.8" stroke-dasharray="1.5 1"/><polygon points="886,629.7 893,633.45 893,640.95 886,644.7 879,640.95 879,633.45" fill="none" stroke="#333" stroke-width="0.9"/><path d="M879,633.45 L886,637.2 L893,633.45 M886,637.2 V644.7" fill="none" stroke="#333" stroke-width="0.9"/>
</svg>
<div id="bottom" class="abs"></div>
<div class="abs" style="left:0;top:654px;width:191px;height:5px;background:#c6c6c6"></div>

</body></html>
